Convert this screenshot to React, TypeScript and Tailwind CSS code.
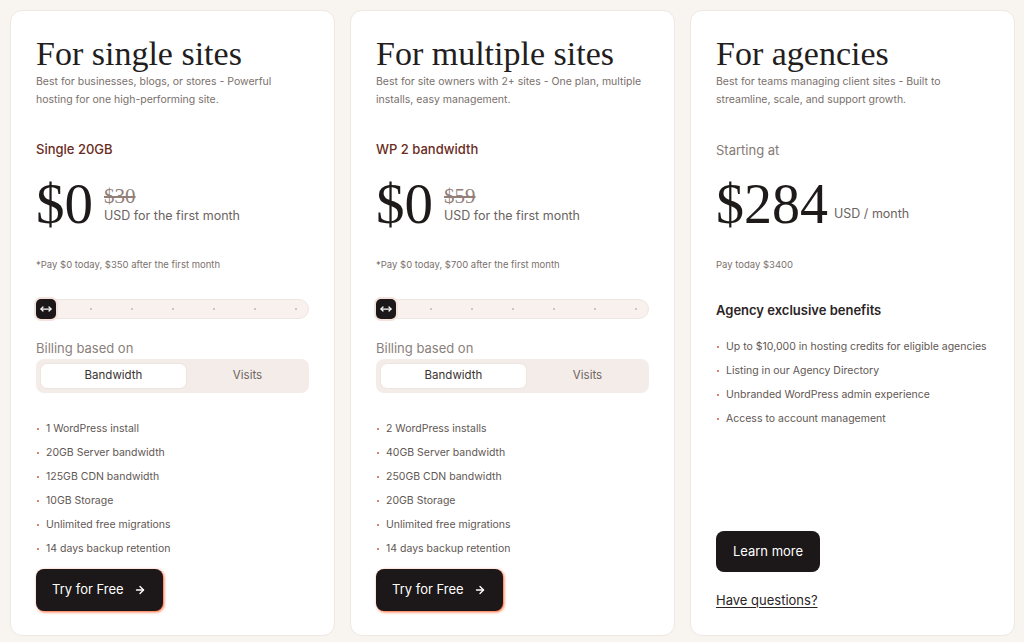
import { ArrowRight, MoveHorizontal } from 'lucide-react';

const serif = { fontFamily: '"Liberation Serif", "Times New Roman", serif' };

type Plan = {
  title: string;
  desc: string[];
  tier: string;
  price: string;
  oldPrice: string;
  pay: string;
  features: string[];
};

const plans: Plan[] = [
  {
    title: 'For single sites',
    desc: ['Best for businesses, blogs, or stores - Powerful', 'hosting for one high-performing site.'],
    tier: 'Single 20GB',
    price: '$0',
    oldPrice: '$30',
    pay: '*Pay $0 today, $350 after the first month',
    features: [
      '1 WordPress install',
      '20GB Server bandwidth',
      '125GB CDN bandwidth',
      '10GB Storage',
      'Unlimited free migrations',
      '14 days backup retention',
    ],
  },
  {
    title: 'For multiple sites',
    desc: ['Best for site owners with 2+ sites - One plan, multiple', 'installs, easy management.'],
    tier: 'WP 2 bandwidth',
    price: '$0',
    oldPrice: '$59',
    pay: '*Pay $0 today, $700 after the first month',
    features: [
      '2 WordPress installs',
      '40GB Server bandwidth',
      '250GB CDN bandwidth',
      '20GB Storage',
      'Unlimited free migrations',
      '14 days backup retention',
    ],
  },
];

const agencyBenefits = [
  'Up to $10,000 in hosting credits for eligible agencies',
  'Listing in our Agency Directory',
  'Unbranded WordPress admin experience',
  'Access to account management',
];

function Bullets({ items }: { items: string[] }) {
  return (
    <ul className="flex flex-col">
      {items.map((item) => (
        <li key={item} className="flex items-center h-[24px] text-[10.5px] text-[#5f5754]">
          <span className="w-[2px] h-[2px] rounded-full bg-[#d4583a] ml-[1px] mr-[7px]" />
          {item}
        </li>
      ))}
    </ul>
  );
}

function Header({ title, desc }: { title: string; desc: string[] }) {
  return (
    <>
      <h2 className="text-[34px] leading-[36px] text-[#231d1d]" style={serif}>
        {title}
      </h2>
      <p className="mt-[1px] text-[10.5px] leading-[18px] text-[#7a706c]">
        {desc[0]}
        <br />
        {desc[1]}
      </p>
    </>
  );
}

function PlanCard({ plan }: { plan: Plan }) {
  return (
    <div className="flex flex-col bg-white rounded-xl border border-[#efe7e2] pt-[25px] px-[25px]">
      <Header title={plan.title} desc={plan.desc} />
      <div className="mt-[30px] h-[20px] leading-[20px] text-[13px] font-medium text-[#6a2c22]">{plan.tier}</div>

      <div className="mt-[18px] flex items-end">
        <span className="text-[57px] leading-[54px] text-[#1f1a1a]" style={serif}>
          {plan.price}
        </span>
        <div className="ml-[11px] pb-[6px] flex flex-col">
          <span className="text-[21px] leading-[22px] text-[#937f7a] line-through" style={serif}>
            {plan.oldPrice}
          </span>
          <span className="text-[12.5px] leading-[18px] text-[#6b6360]">USD for the first month</span>
        </div>
      </div>

      <div className="mt-[27px] text-[9.5px] leading-[14px] text-[#7b716d]">{plan.pay}</div>

      <div className="mt-[27px] h-[20px] flex items-center rounded-full bg-[#f8f1ee] border border-[#f0e6e1]">
        <div className="w-[20px] h-[20px] -ml-px rounded-[5px] bg-[#1c1718] flex items-center justify-center shadow-[0_0_0_2px_#f6e2dc]">
          <MoveHorizontal size={12} strokeWidth={2.5} color="#ffffff" />
        </div>
        <div className="flex-1 flex justify-between pl-[34px] pr-[11px]">
          {[0, 1, 2, 3, 4, 5].map((i) => (
            <span key={i} className="w-[2px] h-[2px] rounded-full bg-[#c3b6b1]" />
          ))}
        </div>
      </div>

      <div className="mt-[20px] h-[18px] leading-[18px] text-[13px] text-[#8a807c]">Billing based on</div>
      <div className="mt-[2px] h-[34px] flex p-[5px] rounded-lg bg-[#f4ece8]">
        <div className="w-[145px] flex items-center justify-center rounded-md bg-white text-[11.5px] text-[#3a3433] shadow-[0_0_0_1px_#efe5e0]">
          Bandwidth
        </div>
        <div className="flex-1 flex items-center justify-center pl-[5px] text-[11.5px] text-[#6b6360]">Visits</div>
      </div>

      <div className="mt-[24px]">
        <Bullets items={plan.features} />
      </div>

      <button className="mt-[8px] w-[127px] h-[42px] flex items-center gap-[10px] pl-[16px] rounded-lg bg-[#1c1718] text-white text-[13px] shadow-[1px_1px_3px_rgba(255,80,20,0.95)]">
        Try for Free
        <ArrowRight size={12} strokeWidth={2.75} />
      </button>
    </div>
  );
}

function AgencyCard() {
  return (
    <div className="flex flex-col bg-white rounded-xl border border-[#efe7e2] pt-[25px] px-[25px] pb-[25px]">
      <Header
        title="For agencies"
        desc={['Best for teams managing client sites - Built to', 'streamline, scale, and support growth.']}
      />
      <div className="mt-[31px] h-[20px] leading-[20px] text-[13px] text-[#857a76]">Starting at</div>

      <div className="mt-[17px] flex items-end">
        <span className="text-[56px] leading-[54px] text-[#1f1a1a]" style={serif}>
          $284
        </span>
        <span className="ml-[6px] pb-[8px] text-[12.5px] leading-[18px] text-[#6b6360]">USD / month</span>
      </div>

      <div className="mt-[27px] text-[9.5px] leading-[14px] text-[#7b716d]">Pay today $3400</div>

      <div className="mt-[28px] h-[20px] leading-[20px] text-[13px] font-semibold text-[#2a2424]">
        Agency exclusive benefits
      </div>

      <div className="mt-[15px]">
        <Bullets items={agencyBenefits} />
      </div>

      <button className="mt-auto w-[104px] h-[41px] flex items-center justify-center rounded-lg bg-[#1c1718] text-white text-[13px]">
        Learn more
      </button>
      <a className="mt-[18px] h-[20px] leading-[20px] text-[13px] text-[#2a2424] underline underline-offset-2 w-fit">
        Have questions?
      </a>
    </div>
  );
}

export default function App() {
  return (
    <div
      className="w-[1024px] h-[642px] bg-[#f8f4f0] grid grid-cols-3 gap-[15px] pl-[10px] pr-[9px] pt-[10px] pb-[6px]"
      style={{ fontFamily: 'Inter, "Noto Sans", sans-serif' }}
    >
      {plans.map((p) => (
        <PlanCard key={p.title} plan={p} />
      ))}
      <AgencyCard />
    </div>
  );
}
